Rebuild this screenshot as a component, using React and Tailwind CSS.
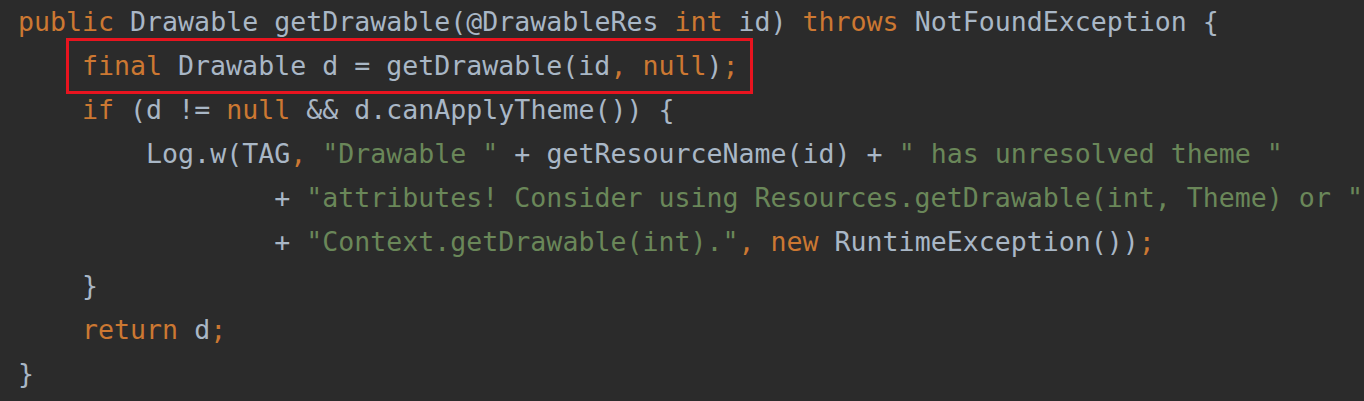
import React from 'react';

const K = 'text-[#cc7832]';
const I = 'text-[#a9b7c6]';
const S = 'text-[#6a8759]';

// each line: array of [text, color]
const lines = [
  [['public ', K], ['Drawable getDrawable(@DrawableRes ', I], ['int ', K], ['id) ', I], ['throws ', K], ['NotFoundException {', I]],
  'boxed',
  [['    ', I], ['if ', K], ['(d != ', I], ['null ', K], ['&& d.canApplyTheme()) {', I]],
  [['        Log.w(TAG', I], [', ', K], ['"Drawable "', S], [' + getResourceName(id) + ', I], ['" has unresolved theme "', S]],
  [['                + ', I], ['"attributes! Consider using Resources.getDrawable(int, Theme) or "', S]],
  [['                + ', I], ['"Context.getDrawable(int)."', S], [', ', K], ['new ', K], ['RuntimeException())', I], [';', K]],
  [['    }', I]],
  [['    ', I], ['return ', K], ['d', I], [';', K]],
  [['}', I]],
];

function Line({ parts }) {
  return (
    <div className="h-[44px] flex items-center whitespace-pre">
      {parts.map(([t, c], i) => (
        <span key={i} className={c}>{t}</span>
      ))}
    </div>
  );
}

export default function App() {
  return (
    <div
      className="w-[1364px] h-[401px] bg-[#2b2b2b] pl-[18px] overflow-hidden text-[26.6px] leading-[44px]"
      style={{ fontFamily: '"DejaVu Sans Mono", "Liberation Mono", monospace' }}
    >
      {lines.map((l, i) =>
        l === 'boxed' ? (
          <div key={i} className="h-[44px] flex items-center whitespace-pre">
            <span className="ml-[48px] h-[56px] -my-[6px] flex items-center border-[3px] border-[#e8141f] pl-[13px] pr-[12px]">
              <span className={K}>final </span>
              <span className={I}>Drawable d = getDrawable(id</span>
              <span className={K}>, null</span>
              <span className={I}>)</span>
              <span className={K}>;</span>
            </span>
          </div>
        ) : (
          <Line key={i} parts={l} />
        )
      )}
    </div>
  );
}
